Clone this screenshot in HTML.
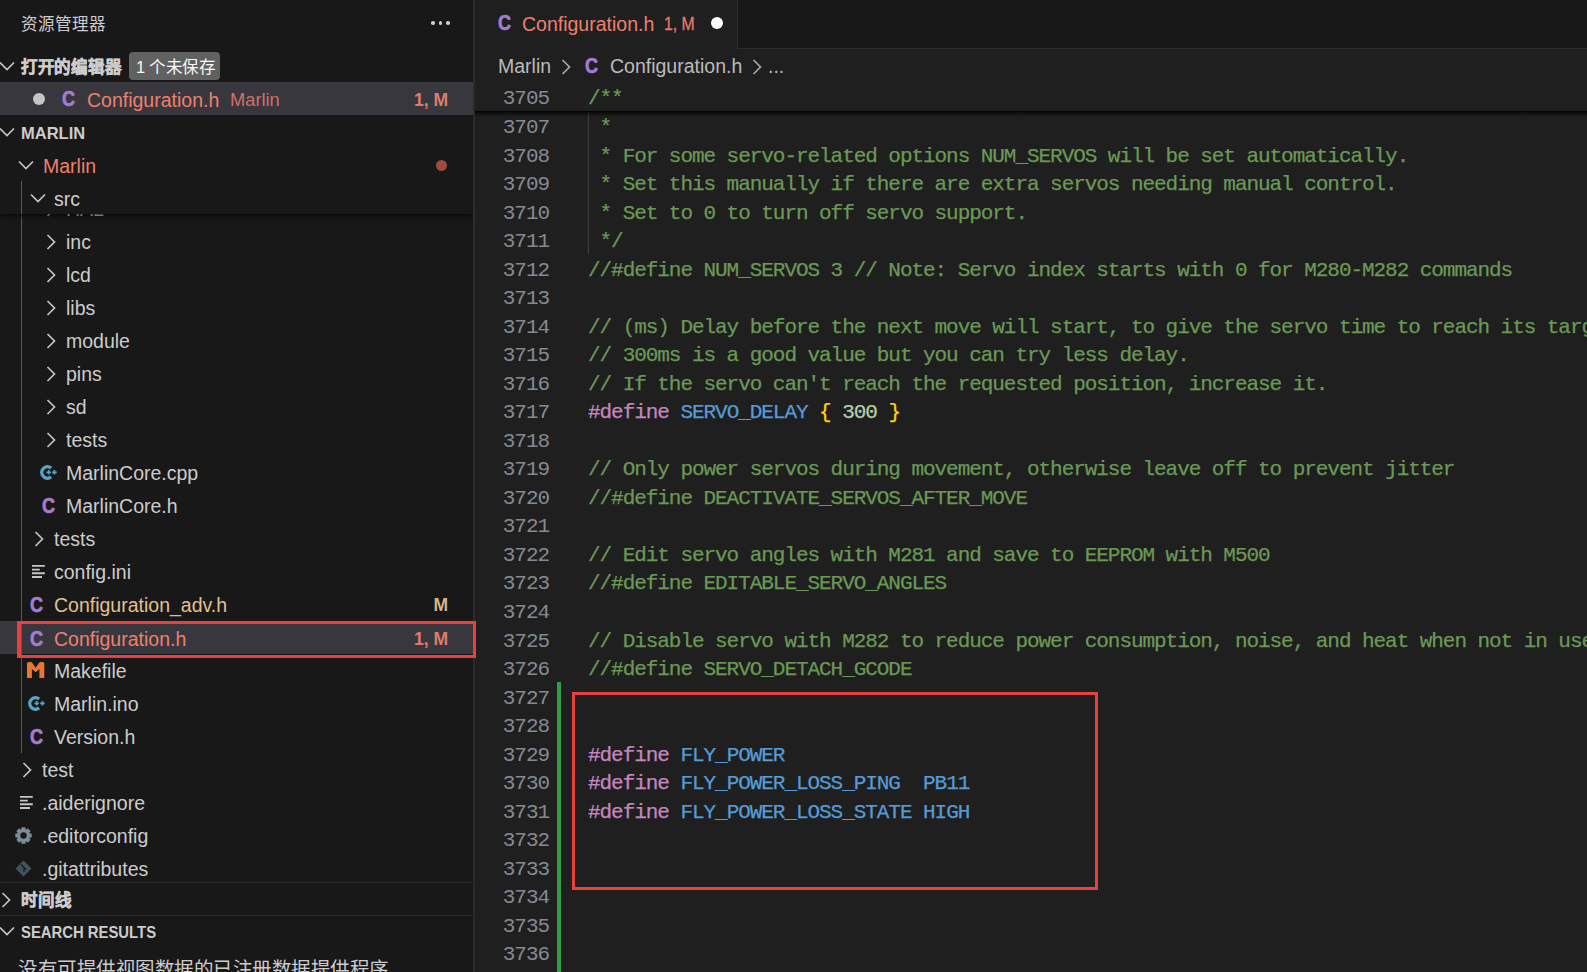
<!DOCTYPE html>
<html lang="zh-CN"><head><meta charset="utf-8"><title>VS Code</title>
<style>
html,body{margin:0;padding:0;width:1587px;height:972px;overflow:hidden;background:#1f1f1f;font-family:"Liberation Sans", sans-serif}
#side{position:absolute;left:0;top:0;width:473px;height:972px;background:#181818;overflow:hidden}
#ed{position:absolute;left:0;top:0;width:0;height:0}
.t{position:absolute;white-space:nowrap;line-height:28px;font-family:"Liberation Sans", sans-serif}
.cl{position:absolute;left:113px;height:28.52px;line-height:28.52px;padding-top:3px;white-space:pre;font-family:"Liberation Mono", monospace;font-size:21px;letter-spacing:-1.05px;-webkit-text-stroke:0.25px currentColor}
.ln{position:absolute;left:0;width:74px;text-align:right;height:28.52px;line-height:28.52px;padding-top:3px;font-family:"Liberation Mono", monospace;font-size:21px;letter-spacing:-1.05px;color:#858a92}
</style></head><body>
<div id="side">
<div class="t" style="left:21px;top:10px;color:#cccccc;font-size:16.5px;font-weight:normal;">资源管理器</div>
<div style="position:absolute;left:431.0px;top:21px;width:3.5px;height:3.5px;border-radius:50%;background:#cccccc"></div>
<div style="position:absolute;left:438.5px;top:21px;width:3.5px;height:3.5px;border-radius:50%;background:#cccccc"></div>
<div style="position:absolute;left:446.0px;top:21px;width:3.5px;height:3.5px;border-radius:50%;background:#cccccc"></div>
<svg style="position:absolute;left:-1px;top:61px" width="16" height="10" viewBox="0 0 16 10"><path d="M1 1.5 L8 8.5 L15 1.5" fill="none" stroke="#c5c5c5" stroke-width="1.7"/></svg>
<div class="t" style="left:21px;top:53px;color:#cccccc;font-size:16.5px;font-weight:bold;letter-spacing:-0.3px;-webkit-text-stroke:0.5px #cccccc;">打开的编辑器</div>
<div style="position:absolute;left:129px;top:52px;width:91px;height:28px;background:#616161;border-radius:4px"></div>
<div class="t" style="left:136px;top:53px;color:#f8f8f8;font-size:16.5px;font-weight:normal;letter-spacing:-0.35px;">1 个未保存</div>
<div style="position:absolute;left:0;top:82px;width:473px;height:33px;background:#37373d"></div>
<div style="position:absolute;left:33px;top:93px;width:12px;height:12px;border-radius:50%;background:#c5c5c5"></div>
<div style="position:absolute;left:62.3px;top:89.3px;font-weight:bold;font-size:22.5px;font-family:'Liberation Sans',sans-serif;color:#a77bcc;line-height:20px;transform:scaleX(0.8);transform-origin:0 0;-webkit-text-stroke:0.7px #a77bcc">C</div>
<div class="t" style="left:87px;top:86px;color:#ee806e;font-size:19.5px;font-weight:normal;">Configuration.h</div>
<div class="t" style="left:230px;top:86px;color:#d27063;font-size:18.3px;font-weight:normal;">Marlin</div>
<div class="t" style="left:448px;top:86px;color:#e07b6b;font-size:17.5px;font-weight:bold;transform:translateX(-100%);">1, M</div>
<svg style="position:absolute;left:-1px;top:127px" width="16" height="10" viewBox="0 0 16 10"><path d="M1 1.5 L8 8.5 L15 1.5" fill="none" stroke="#c5c5c5" stroke-width="1.7"/></svg>
<div class="t" style="left:21px;top:119px;color:#cccccc;font-size:16.5px;font-weight:bold;">MARLIN</div>
<div style="position:absolute;left:0;top:621px;width:473px;height:33px;background:#37373d"></div>
<div style="position:absolute;left:21px;top:181px;width:1px;height:572px;background:#585858"></div>
<svg style="position:absolute;left:46px;top:200.7px" width="10" height="16" viewBox="0 0 10 16"><path d="M1.5 1 L8.5 8 L1.5 15" fill="none" stroke="#c5c5c5" stroke-width="1.7"/></svg>
<div class="t" style="left:66px;top:195px;color:#cccccc;font-size:19.5px;font-weight:normal;">HAL</div>
<svg style="position:absolute;left:46px;top:233.7px" width="10" height="16" viewBox="0 0 10 16"><path d="M1.5 1 L8.5 8 L1.5 15" fill="none" stroke="#c5c5c5" stroke-width="1.7"/></svg>
<div class="t" style="left:66px;top:228px;color:#cccccc;font-size:19.5px;font-weight:normal;">inc</div>
<svg style="position:absolute;left:46px;top:266.7px" width="10" height="16" viewBox="0 0 10 16"><path d="M1.5 1 L8.5 8 L1.5 15" fill="none" stroke="#c5c5c5" stroke-width="1.7"/></svg>
<div class="t" style="left:66px;top:261px;color:#cccccc;font-size:19.5px;font-weight:normal;">lcd</div>
<svg style="position:absolute;left:46px;top:299.7px" width="10" height="16" viewBox="0 0 10 16"><path d="M1.5 1 L8.5 8 L1.5 15" fill="none" stroke="#c5c5c5" stroke-width="1.7"/></svg>
<div class="t" style="left:66px;top:294px;color:#cccccc;font-size:19.5px;font-weight:normal;">libs</div>
<svg style="position:absolute;left:46px;top:332.7px" width="10" height="16" viewBox="0 0 10 16"><path d="M1.5 1 L8.5 8 L1.5 15" fill="none" stroke="#c5c5c5" stroke-width="1.7"/></svg>
<div class="t" style="left:66px;top:327px;color:#cccccc;font-size:19.5px;font-weight:normal;">module</div>
<svg style="position:absolute;left:46px;top:365.7px" width="10" height="16" viewBox="0 0 10 16"><path d="M1.5 1 L8.5 8 L1.5 15" fill="none" stroke="#c5c5c5" stroke-width="1.7"/></svg>
<div class="t" style="left:66px;top:360px;color:#cccccc;font-size:19.5px;font-weight:normal;">pins</div>
<svg style="position:absolute;left:46px;top:398.7px" width="10" height="16" viewBox="0 0 10 16"><path d="M1.5 1 L8.5 8 L1.5 15" fill="none" stroke="#c5c5c5" stroke-width="1.7"/></svg>
<div class="t" style="left:66px;top:393px;color:#cccccc;font-size:19.5px;font-weight:normal;">sd</div>
<svg style="position:absolute;left:46px;top:431.7px" width="10" height="16" viewBox="0 0 10 16"><path d="M1.5 1 L8.5 8 L1.5 15" fill="none" stroke="#c5c5c5" stroke-width="1.7"/></svg>
<div class="t" style="left:66px;top:426px;color:#cccccc;font-size:19.5px;font-weight:normal;">tests</div>
<svg style="position:absolute;left:40.3px;top:464.5px" width="18" height="15" viewBox="0 0 18 15"><path d="M11.1 3.1 A5.7 5.7 0 1 0 11.1 11.9" fill="none" stroke="#58a2c4" stroke-width="3.4"/><path d="M6.4 7.3 H11 M8.7 5 V9.6 M12.1 7.3 H16.7 M14.4 5 V9.6" stroke="#58a2c4" stroke-width="1.7"/></svg>
<div class="t" style="left:66px;top:459px;color:#cccccc;font-size:19.5px;font-weight:normal;">MarlinCore.cpp</div>
<div style="position:absolute;left:41.5px;top:496px;font-weight:bold;font-size:22.5px;font-family:'Liberation Sans',sans-serif;color:#a77bcc;line-height:20px;transform:scaleX(0.8);transform-origin:0 0;-webkit-text-stroke:0.7px #a77bcc">C</div>
<div class="t" style="left:66px;top:492px;color:#cccccc;font-size:19.5px;font-weight:normal;">MarlinCore.h</div>
<svg style="position:absolute;left:34px;top:530.7px" width="10" height="16" viewBox="0 0 10 16"><path d="M1.5 1 L8.5 8 L1.5 15" fill="none" stroke="#c5c5c5" stroke-width="1.7"/></svg>
<div class="t" style="left:54px;top:525px;color:#cccccc;font-size:19.5px;font-weight:normal;">tests</div>
<svg style="position:absolute;left:32px;top:564px" width="14" height="14" viewBox="0 0 14 14"><path d="M0 1.9 H12.8 M0 5.6 H7.8 M0 9.2 H12.8 M0 13 H10" stroke="#c5c5c5" stroke-width="1.9"/></svg>
<div class="t" style="left:54px;top:558px;color:#cccccc;font-size:19.5px;font-weight:normal;">config.ini</div>
<div style="position:absolute;left:29.8px;top:595px;font-weight:bold;font-size:22.5px;font-family:'Liberation Sans',sans-serif;color:#a77bcc;line-height:20px;transform:scaleX(0.8);transform-origin:0 0;-webkit-text-stroke:0.7px #a77bcc">C</div>
<div class="t" style="left:54px;top:591px;color:#e2c08d;font-size:19.5px;font-weight:normal;">Configuration_adv.h</div>
<div style="position:absolute;left:29.8px;top:628.5px;font-weight:bold;font-size:22.5px;font-family:'Liberation Sans',sans-serif;color:#a77bcc;line-height:20px;transform:scaleX(0.8);transform-origin:0 0;-webkit-text-stroke:0.7px #a77bcc">C</div>
<div class="t" style="left:54px;top:624.5px;color:#ee806e;font-size:19.5px;font-weight:normal;">Configuration.h</div>
<svg style="position:absolute;left:26.9px;top:661.9px" width="18" height="16" viewBox="0 0 18 16"><path d="M0 16 V1.6 Q0 0 1.6 0 H4.6 L8.65 5.7 L12.7 0 H15.7 Q17.3 0 17.3 1.6 V16 H12.4 V7 L8.65 10.2 L4.9 7 V16 Z" fill="#e37933"/></svg>
<div class="t" style="left:54px;top:657px;color:#cccccc;font-size:19.5px;font-weight:normal;">Makefile</div>
<svg style="position:absolute;left:28px;top:695.5px" width="18" height="15" viewBox="0 0 18 15"><path d="M11.1 3.1 A5.7 5.7 0 1 0 11.1 11.9" fill="none" stroke="#58a2c4" stroke-width="3.4"/><path d="M6.4 7.3 H11 M8.7 5 V9.6 M12.1 7.3 H16.7 M14.4 5 V9.6" stroke="#58a2c4" stroke-width="1.7"/></svg>
<div class="t" style="left:54px;top:690px;color:#cccccc;font-size:19.5px;font-weight:normal;">Marlin.ino</div>
<div style="position:absolute;left:29.8px;top:727px;font-weight:bold;font-size:22.5px;font-family:'Liberation Sans',sans-serif;color:#a77bcc;line-height:20px;transform:scaleX(0.8);transform-origin:0 0;-webkit-text-stroke:0.7px #a77bcc">C</div>
<div class="t" style="left:54px;top:723px;color:#cccccc;font-size:19.5px;font-weight:normal;">Version.h</div>
<svg style="position:absolute;left:22px;top:761.7px" width="10" height="16" viewBox="0 0 10 16"><path d="M1.5 1 L8.5 8 L1.5 15" fill="none" stroke="#c5c5c5" stroke-width="1.7"/></svg>
<div class="t" style="left:42px;top:756px;color:#cccccc;font-size:19.5px;font-weight:normal;">test</div>
<svg style="position:absolute;left:20px;top:795px" width="14" height="14" viewBox="0 0 14 14"><path d="M0 1.9 H12.8 M0 5.6 H7.8 M0 9.2 H12.8 M0 13 H10" stroke="#c5c5c5" stroke-width="1.9"/></svg>
<div class="t" style="left:42px;top:789px;color:#cccccc;font-size:19.5px;font-weight:normal;">.aiderignore</div>
<svg style="position:absolute;left:15px;top:826.5px" width="17" height="17" viewBox="0 0 17 17"><polygon points="14.76,6.40 16.66,6.50 16.66,10.50 14.76,10.60 14.60,11.03 14.41,11.44 15.68,12.86 12.86,15.68 11.44,14.41 11.03,14.60 10.60,14.76 10.50,16.66 6.50,16.66 6.40,14.76 5.97,14.60 5.56,14.41 4.14,15.68 1.32,12.86 2.59,11.44 2.40,11.03 2.24,10.60 0.34,10.50 0.34,6.50 2.24,6.40 2.40,5.97 2.59,5.56 1.32,4.14 4.14,1.32 5.56,2.59 5.97,2.40 6.40,2.24 6.50,0.34 10.50,0.34 10.60,2.24 11.03,2.40 11.44,2.59 12.86,1.32 15.68,4.14 14.41,5.56 14.60,5.97" fill="#7b8d95"/><circle cx="8.5" cy="8.5" r="3.2" fill="#181818"/></svg>
<div class="t" style="left:42px;top:822px;color:#cccccc;font-size:19.5px;font-weight:normal;">.editorconfig</div>
<svg style="position:absolute;left:15px;top:860px" width="17" height="17" viewBox="0 0 17 17"><path d="M8.5 0.5 L16.5 8.5 L8.5 16.5 L0.5 8.5 Z" fill="#41535b"/><path d="M6 4.5 L9 7.5 V12 M9 7.5 L11 9.5" stroke="#181818" stroke-width="1.2" fill="none"/></svg>
<div class="t" style="left:42px;top:855px;color:#cccccc;font-size:19.5px;font-weight:normal;">.gitattributes</div>
<div class="t" style="left:448px;top:591px;color:#d6b685;font-size:17.5px;font-weight:bold;transform:translateX(-100%);">M</div>
<div class="t" style="left:448px;top:624.5px;color:#e07b6b;font-size:17.5px;font-weight:bold;transform:translateX(-100%);">1, M</div>
<div style="position:absolute;left:0;top:148px;width:473px;height:66px;background:#181818;box-shadow:0 3px 4px rgba(0,0,0,0.55)"></div>
<div style="position:absolute;left:21px;top:181px;width:1px;height:33px;background:#585858"></div>
<svg style="position:absolute;left:18px;top:160px" width="16" height="10" viewBox="0 0 16 10"><path d="M1 1.5 L8 8.5 L15 1.5" fill="none" stroke="#c5c5c5" stroke-width="1.7"/></svg>
<div class="t" style="left:43px;top:152px;color:#ee806e;font-size:19.5px;font-weight:normal;">Marlin</div>
<div style="position:absolute;left:435.8px;top:159.5px;width:11px;height:11px;border-radius:50%;background:#9c4a43"></div>
<svg style="position:absolute;left:30px;top:193px" width="16" height="10" viewBox="0 0 16 10"><path d="M1 1.5 L8 8.5 L15 1.5" fill="none" stroke="#c5c5c5" stroke-width="1.7"/></svg>
<div class="t" style="left:54px;top:185px;color:#cccccc;font-size:19.5px;font-weight:normal;">src</div>
<div style="position:absolute;left:0;top:882px;width:473px;height:1px;background:#2b2b2b"></div>
<svg style="position:absolute;left:1px;top:891.7px" width="10" height="16" viewBox="0 0 10 16"><path d="M1.5 1 L8.5 8 L1.5 15" fill="none" stroke="#c5c5c5" stroke-width="1.7"/></svg>
<div class="t" style="left:21px;top:886px;color:#cccccc;font-size:16.5px;font-weight:bold;-webkit-text-stroke:0.5px #cccccc;">时间线</div>
<div style="position:absolute;left:0;top:915px;width:473px;height:1px;background:#2b2b2b"></div>
<svg style="position:absolute;left:-1px;top:926px" width="16" height="10" viewBox="0 0 16 10"><path d="M1 1.5 L8 8.5 L15 1.5" fill="none" stroke="#c5c5c5" stroke-width="1.7"/></svg>
<div class="t" style="left:21px;top:918px;color:#cccccc;font-size:16.5px;font-weight:bold;transform:scaleX(0.9);transform-origin:0 0;">SEARCH RESULTS</div>
<div class="t" style="left:18px;top:955px;color:#cccccc;font-size:19.5px;font-weight:normal;letter-spacing:-0.5px;">没有可提供视图数据的已注册数据提供程序</div>
</div>
<div style="position:absolute;left:473px;top:0;width:2px;height:972px;background:#2b2b2b"></div>
<div style="position:absolute;left:17px;top:621px;width:459px;height:37px;box-sizing:border-box;border:3.5px solid #e8403f;border-left-width:4px;z-index:5"></div>
<div id="ed">
<div style="position:absolute;left:475px;top:0;width:1112px;height:49px;background:#181818;border-bottom:1px solid #2b2b2b;box-sizing:border-box"></div>
<div style="position:absolute;left:475px;top:0;width:263px;height:49px;background:#1f1f1f;border-right:1px solid #2b2b2b;box-sizing:border-box"></div>
<div style="position:absolute;left:497.7px;top:13.399999999999999px;font-weight:bold;font-size:22.5px;font-family:'Liberation Sans',sans-serif;color:#a77bcc;line-height:20px;transform:scaleX(0.8);transform-origin:0 0;-webkit-text-stroke:0.7px #a77bcc">C</div>
<div class="t" style="left:522px;top:10px;color:#ee806e;font-size:19.5px;font-weight:normal;">Configuration.h</div>
<div class="t" style="left:663.5px;top:10px;color:#e07a6b;font-size:17.5px;font-weight:normal;transform:scaleX(0.9);transform-origin:0 0;-webkit-text-stroke:0.3px #e07a6b;">1, M</div>
<div style="position:absolute;left:710.5px;top:16.7px;width:12.4px;height:12.4px;border-radius:50%;background:#ffffff"></div>
<div class="t" style="left:498px;top:52px;color:#bbbbbb;font-size:19.5px;font-weight:normal;">Marlin</div>
<svg style="position:absolute;left:560.5px;top:59.2px" width="10" height="16" viewBox="0 0 10 16"><path d="M1.5 1 L8.5 8 L1.5 15" fill="none" stroke="#a9a9a9" stroke-width="1.7"/></svg>
<div style="position:absolute;left:585.3px;top:56.400000000000006px;font-weight:bold;font-size:22.5px;font-family:'Liberation Sans',sans-serif;color:#a77bcc;line-height:20px;transform:scaleX(0.8);transform-origin:0 0;-webkit-text-stroke:0.7px #a77bcc">C</div>
<div class="t" style="left:610px;top:52px;color:#bbbbbb;font-size:19.5px;font-weight:normal;">Configuration.h</div>
<svg style="position:absolute;left:752px;top:58.7px" width="10" height="16" viewBox="0 0 10 16"><path d="M1.5 1 L8.5 8 L1.5 15" fill="none" stroke="#a9a9a9" stroke-width="1.7"/></svg>
<div class="t" style="left:768px;top:52px;color:#bbbbbb;font-size:19.5px;font-weight:normal;">...</div>
<div id="code" style="position:absolute;left:475px;top:82px;width:1112px;height:890px;overflow:hidden;background:#1f1f1f">
<div style="position:absolute;left:0;top:-82px;width:1112px;height:972px">
<div class="cl" style="top:82.62px"><span style="color:#6a9955"> *</span></div><div class="ln" style="top:82.62px">3706</div>
<div class="cl" style="top:111.14px"><span style="color:#6a9955"> *</span></div><div class="ln" style="top:111.14px">3707</div>
<div class="cl" style="top:139.66px"><span style="color:#6a9955"> * For some servo-related options NUM_SERVOS will be set automatically.</span></div><div class="ln" style="top:139.66px">3708</div>
<div class="cl" style="top:168.18px"><span style="color:#6a9955"> * Set this manually if there are extra servos needing manual control.</span></div><div class="ln" style="top:168.18px">3709</div>
<div class="cl" style="top:196.70px"><span style="color:#6a9955"> * Set to 0 to turn off servo support.</span></div><div class="ln" style="top:196.70px">3710</div>
<div class="cl" style="top:225.22px"><span style="color:#6a9955"> */</span></div><div class="ln" style="top:225.22px">3711</div>
<div class="cl" style="top:253.74px"><span style="color:#6a9955">//#define NUM_SERVOS 3 // Note: Servo index starts with 0 for M280-M282 commands</span></div><div class="ln" style="top:253.74px">3712</div>
<div class="cl" style="top:282.26px"></div><div class="ln" style="top:282.26px">3713</div>
<div class="cl" style="top:310.78px"><span style="color:#6a9955">// (ms) Delay before the next move will start, to give the servo time to reach its target angle.</span></div><div class="ln" style="top:310.78px">3714</div>
<div class="cl" style="top:339.30px"><span style="color:#6a9955">// 300ms is a good value but you can try less delay.</span></div><div class="ln" style="top:339.30px">3715</div>
<div class="cl" style="top:367.82px"><span style="color:#6a9955">// If the servo can&#x27;t reach the requested position, increase it.</span></div><div class="ln" style="top:367.82px">3716</div>
<div class="cl" style="top:396.34px"><span style="color:#c586c0">#define</span> <span style="color:#569cd6">SERVO_DELAY</span> <span style="color:#ffd700">{</span> <span style="color:#b5cea8">300</span> <span style="color:#ffd700">}</span></div><div class="ln" style="top:396.34px">3717</div>
<div class="cl" style="top:424.86px"></div><div class="ln" style="top:424.86px">3718</div>
<div class="cl" style="top:453.38px"><span style="color:#6a9955">// Only power servos during movement, otherwise leave off to prevent jitter</span></div><div class="ln" style="top:453.38px">3719</div>
<div class="cl" style="top:481.90px"><span style="color:#6a9955">//#define DEACTIVATE_SERVOS_AFTER_MOVE</span></div><div class="ln" style="top:481.90px">3720</div>
<div class="cl" style="top:510.42px"></div><div class="ln" style="top:510.42px">3721</div>
<div class="cl" style="top:538.94px"><span style="color:#6a9955">// Edit servo angles with M281 and save to EEPROM with M500</span></div><div class="ln" style="top:538.94px">3722</div>
<div class="cl" style="top:567.46px"><span style="color:#6a9955">//#define EDITABLE_SERVO_ANGLES</span></div><div class="ln" style="top:567.46px">3723</div>
<div class="cl" style="top:595.98px"></div><div class="ln" style="top:595.98px">3724</div>
<div class="cl" style="top:624.50px"><span style="color:#6a9955">// Disable servo with M282 to reduce power consumption, noise, and heat when not in use</span></div><div class="ln" style="top:624.50px">3725</div>
<div class="cl" style="top:653.02px"><span style="color:#6a9955">//#define SERVO_DETACH_GCODE</span></div><div class="ln" style="top:653.02px">3726</div>
<div class="cl" style="top:681.54px"></div><div class="ln" style="top:681.54px">3727</div>
<div class="cl" style="top:710.06px"></div><div class="ln" style="top:710.06px">3728</div>
<div class="cl" style="top:738.58px"><span style="color:#c586c0">#define</span> <span style="color:#569cd6">FLY_POWER</span></div><div class="ln" style="top:738.58px">3729</div>
<div class="cl" style="top:767.10px"><span style="color:#c586c0">#define</span> <span style="color:#569cd6">FLY_POWER_LOSS_PING</span>  <span style="color:#569cd6">PB11</span></div><div class="ln" style="top:767.10px">3730</div>
<div class="cl" style="top:795.62px"><span style="color:#c586c0">#define</span> <span style="color:#569cd6">FLY_POWER_LOSS_STATE</span> <span style="color:#569cd6">HIGH</span></div><div class="ln" style="top:795.62px">3731</div>
<div class="cl" style="top:824.14px"></div><div class="ln" style="top:824.14px">3732</div>
<div class="cl" style="top:852.66px"></div><div class="ln" style="top:852.66px">3733</div>
<div class="cl" style="top:881.18px"></div><div class="ln" style="top:881.18px">3734</div>
<div class="cl" style="top:909.70px"></div><div class="ln" style="top:909.70px">3735</div>
<div class="cl" style="top:938.22px"></div><div class="ln" style="top:938.22px">3736</div>
<div class="cl" style="top:966.74px"></div><div class="ln" style="top:966.74px">3737</div>
<div style="position:absolute;left:113px;top:111.14px;width:1px;height:142.60px;background:#404040"></div>
<div style="position:absolute;left:82px;top:681.54px;width:4px;height:400px;background:#2ea043"></div>
</div>
<div style="position:absolute;left:0;top:28.7px;width:1112px;height:6px;background:linear-gradient(rgba(0,0,0,0.95),rgba(0,0,0,0.45) 40%,rgba(0,0,0,0))"></div>
<div style="position:absolute;left:0;top:0;width:1112px;height:28.7px;background:#1f1f1f">
<div class="cl" style="top:0"><span style="color:#6a9955">/**</span></div><div class="ln" style="top:0">3705</div>
</div>
</div>
<div style="position:absolute;left:572px;top:692px;width:526px;height:198px;box-sizing:border-box;border:3.5px solid #e8403f"></div>
</div>
</body></html>
